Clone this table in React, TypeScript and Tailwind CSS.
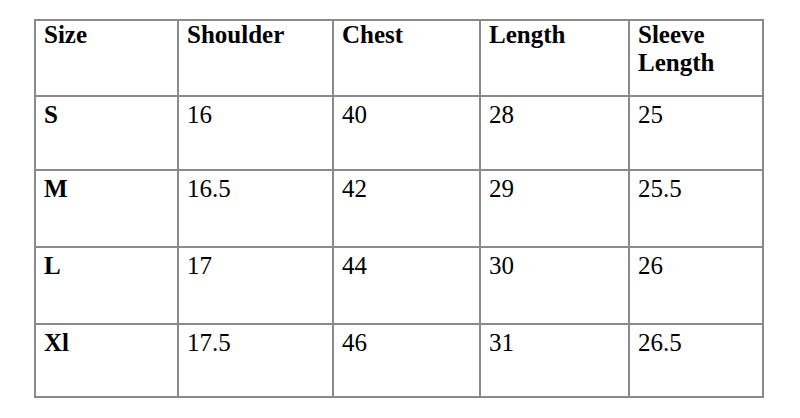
const headers = ["Size", "Shoulder", "Chest", "Length", "Sleeve Length"];

const rows = [
  { size: "S", values: ["16", "40", "28", "25"], h: "h-[74px]" },
  { size: "M", values: ["16.5", "42", "29", "25.5"], h: "h-[77px]" },
  { size: "L", values: ["17", "44", "30", "26"], h: "h-[77px]" },
  { size: "Xl", values: ["17.5", "46", "31", "26.5"], h: "h-[73px]" },
];

const colWidths = ["w-[143px]", "w-[155px]", "w-[147px]", "w-[149px]", "w-[134px]"];

export default function App() {
  return (
    <div className="h-[418px] w-[800px] bg-white pl-[34px] pt-[19px] font-[Liberation_Serif,serif] text-[25px] leading-[28px] text-black">
      <table className="w-[730px] table-fixed border-collapse">
        <colgroup>
          {colWidths.map((w, i) => (
            <col key={i} className={w} />
          ))}
        </colgroup>
        <thead>
          <tr className="h-[76px]">
            {headers.map((h) => (
              <th
                key={h}
                className="border-2 border-[#8a8a8a] px-[8px] pb-0 pt-0 text-left align-top font-bold"
              >
                {h === "Sleeve Length" ? (
                  <>
                    Sleeve
                    <br />
                    Length
                  </>
                ) : (
                  h
                )}
              </th>
            ))}
          </tr>
        </thead>
        <tbody>
          {rows.map((r) => (
            <tr key={r.size} className={r.h}>
              <td className="border-2 border-[#8a8a8a] px-[8px] pt-[4px] align-top font-bold">
                {r.size}
              </td>
              {r.values.map((v, i) => (
                <td
                  key={i}
                  className="border-2 border-[#8a8a8a] px-[8px] pt-[4px] align-top"
                >
                  {v}
                </td>
              ))}
            </tr>
          ))}
        </tbody>
      </table>
    </div>
  );
}
